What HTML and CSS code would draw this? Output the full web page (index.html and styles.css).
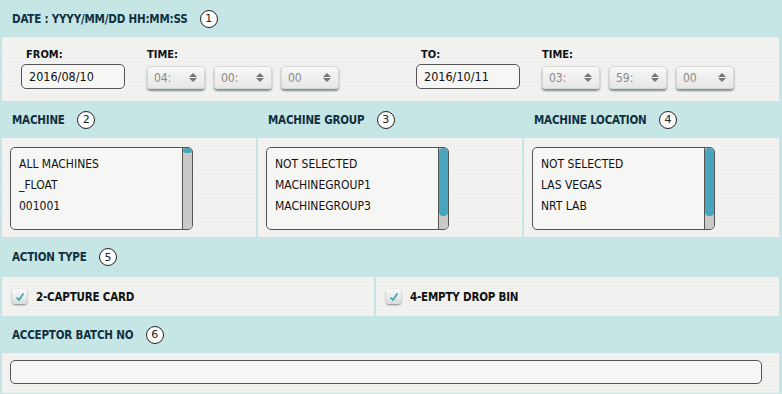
FILE: index.html
```html
<!DOCTYPE html>
<html lang="en">
<head>
  <meta charset="UTF-8">
  <meta name="viewport" content="width=device-width, initial-scale=1.0">
  <title>Report Filter</title>
  <link rel="stylesheet" href="styles.css">
</head>
<body>
  <div class="filter">
    <div class="band-head">DATE : YYYY/MM/DD HH:MM:SS <span class="badge">1</span></div>
    <div class="panel date-row">
      <div class="field">
        <label>FROM:</label>
        <div class="date-input">2016/08/10</div>
      </div>
      <div class="field time">
        <label>TIME:</label>
        <div class="selects">
          <div class="sel"><span>04:</span><i class="arrows"></i></div>
          <div class="sel"><span>00:</span><i class="arrows"></i></div>
          <div class="sel"><span>00</span><i class="arrows"></i></div>
        </div>
      </div>
      <div class="field to">
        <label>TO:</label>
        <div class="date-input">2016/10/11</div>
      </div>
      <div class="field time">
        <label>TIME:</label>
        <div class="selects">
          <div class="sel"><span>03:</span><i class="arrows"></i></div>
          <div class="sel"><span>59:</span><i class="arrows"></i></div>
          <div class="sel"><span>00</span><i class="arrows"></i></div>
        </div>
      </div>
    </div>

    <div class="cols three">
      <div class="col">
        <div class="band-head">MACHINE <span class="badge">2</span></div>
        <div class="panel list-panel">
          <div class="listbox">
            <ul>
              <li>ALL MACHINES</li>
              <li>_FLOAT</li>
              <li>001001</li>
            </ul>
            <div class="scroll"><div class="thumb small"></div></div>
          </div>
        </div>
      </div>
      <div class="col">
        <div class="band-head">MACHINE GROUP <span class="badge">3</span></div>
        <div class="panel list-panel">
          <div class="listbox">
            <ul>
              <li>NOT SELECTED</li>
              <li>MACHINEGROUP1</li>
              <li>MACHINEGROUP3</li>
            </ul>
            <div class="scroll"><div class="thumb"></div></div>
          </div>
        </div>
      </div>
      <div class="col">
        <div class="band-head">MACHINE LOCATION <span class="badge">4</span></div>
        <div class="panel list-panel">
          <div class="listbox">
            <ul>
              <li>NOT SELECTED</li>
              <li>LAS VEGAS</li>
              <li>NRT LAB</li>
            </ul>
            <div class="scroll"><div class="thumb"></div></div>
          </div>
        </div>
      </div>
    </div>

    <div class="band-head tall">ACTION TYPE <span class="badge">5</span></div>
    <div class="cols two">
      <div class="panel check-panel">
        <span class="check"><svg width="10" height="10" viewBox="0 0 10 10"><path d="M1.5 5.5 L4 8 L8.5 1.5" fill="none" stroke="#3aa0b8" stroke-width="1.6"/></svg></span>
        2-CAPTURE CARD
      </div>
      <div class="panel check-panel">
        <span class="check"><svg width="10" height="10" viewBox="0 0 10 10"><path d="M1.5 5.5 L4 8 L8.5 1.5" fill="none" stroke="#3aa0b8" stroke-width="1.6"/></svg></span>
        4-EMPTY DROP BIN
      </div>
    </div>

    <div class="band-head">ACCEPTOR BATCH NO <span class="badge">6</span></div>
    <div class="panel batch-panel">
      <div class="batch-input"></div>
    </div>
  </div>
</body>
</html>
```

FILE: styles.css
```css
body {
    margin: 0;
    background-color: #c6e5e5;
    font-family: "DejaVu Sans Condensed", "DejaVu Sans", sans-serif;
    color: #111;
}

.filter {
    width: 782px;
    height: 394px;
    background-color: #c6e5e5;
}

.band-head {
    height: 37px;
    display: flex;
    align-items: center;
    padding-left: 12px;
    font-size: 11.5px;
    font-weight: bold;
    color: #10303f;
    letter-spacing: -0.2px;
    white-space: pre;
}

.band-head.tall {
    height: 40px;
}

.badge {
    display: inline-flex;
    align-items: center;
    justify-content: center;
    width: 16px;
    height: 16px;
    margin-left: 9px;
    border: 1px solid #222;
    border-radius: 50%;
    background-color: #fff;
    font-weight: normal;
    font-size: 11px;
    color: #222;
    letter-spacing: 0;
    font-family: "DejaVu Sans", sans-serif;
}

.panel {
    background-color: #f2f2f0;
    background-image: repeating-linear-gradient(0deg, rgba(0,0,0,0.015) 0 1px, transparent 1px 3px);
    margin: 0 3px 0 2px;
}

/* date row */
.date-row {
    height: 64px;
    display: flex;
    padding-left: 19px;
    box-sizing: border-box;
}

.field {
    display: flex;
    flex-direction: column;
}

.field label {
    font-size: 11px;
    font-weight: bold;
    color: #111;
    margin: 11px 0 4px 5px;
    height: 12px;
}

.field.time {
    margin-left: 22px;
}

.field.time label {
    margin-left: 0;
}

.field.to {
    margin-left: 77px;
}

.date-input {
    width: 104px;
    height: 25px;
    border: 1px solid #555;
    border-radius: 5px;
    background-color: #f6f6f4;
    font-size: 12.5px;
    display: flex;
    align-items: center;
    padding-left: 7px;
    box-sizing: border-box;
}

.selects {
    display: flex;
    gap: 9px;
    margin-top: 2px;
}

.sel {
    width: 58px;
    height: 23px;
    border-radius: 4px;
    background: linear-gradient(#f8f8f6, #e6e6e4);
    box-shadow: 0 2px 2px rgba(30, 60, 70, 0.55), inset 0 0 0 1px #d8d8d6;
    display: flex;
    align-items: center;
    justify-content: space-between;
    padding: 0 8px 0 7px;
    box-sizing: border-box;
    font-size: 12px;
    color: #8a8a8a;
}

.arrows {
    width: 0;
    height: 9px;
    position: relative;
    border-left: 4px solid transparent;
    border-right: 4px solid transparent;
    box-sizing: content-box;
}

.arrows::before,
.arrows::after {
    content: "";
    position: absolute;
    left: -4px;
    border-left: 4px solid transparent;
    border-right: 4px solid transparent;
}

.arrows::before {
    top: 0;
    border-bottom: 4px solid #777;
}

.arrows::after {
    bottom: 0;
    border-top: 4px solid #777;
}

/* columns */
.cols {
    display: flex;
}

.cols.three .col {
    display: flex;
    flex-direction: column;
}

.cols.three .col:nth-child(1) { width: 256px; }
.cols.three .col:nth-child(2) { width: 266px; }
.cols.three .col:nth-child(3) { width: 260px; }

.cols.three .col .panel {
    margin: 0 0 0 2px;
}

.cols.three .col:nth-child(3) .panel {
    margin-right: 3px;
}

.list-panel {
    height: 99px;
    padding: 9px 0 0 8px;
    box-sizing: border-box;
}

.listbox {
    width: 183px;
    height: 83px;
    border: 1px solid #555;
    border-radius: 5px;
    background-color: #f6f6f4;
    box-sizing: border-box;
    display: flex;
    justify-content: space-between;
    overflow: hidden;
}

.listbox ul {
    list-style: none;
    margin: 0;
    padding: 8px 0 0 8px;
}

.listbox li {
    font-size: 12px;
    height: 21px;
    line-height: 16px;
}

.scroll {
    width: 9px;
    background-color: #c9c9c7;
    border-left: 1px solid #555;
    border-radius: 0 4px 4px 0;
}

.thumb {
    height: 68px;
    background-color: #47a5bd;
    border-radius: 4px;
}

.thumb.small {
    height: 5px;
}

/* action type */
.cols.two .check-panel:first-child {
    width: 372px;
    margin-right: 0;
}

.cols.two .check-panel:last-child {
    flex: 1;
}

.check-panel {
    height: 39px;
    display: flex;
    align-items: center;
    padding-left: 10px;
    box-sizing: border-box;
    font-size: 11.5px;
    font-weight: bold;
    letter-spacing: -0.2px;
}

.check {
    width: 15px;
    height: 15px;
    border-radius: 3px;
    background: linear-gradient(#fafafa, #d9dcdc);
    box-shadow: 0 1px 2px rgba(0, 0, 0, 0.45);
    margin-right: 9px;
    display: flex;
    align-items: center;
    justify-content: center;
}

/* batch */
.batch-panel {
    height: 40px;
    padding: 7px 0 0 8px;
    box-sizing: border-box;
}

.batch-input {
    width: 752px;
    height: 24px;
    border: 1px solid #555;
    border-radius: 5px;
    background-color: #f6f6f4;
    box-sizing: border-box;
}
```
